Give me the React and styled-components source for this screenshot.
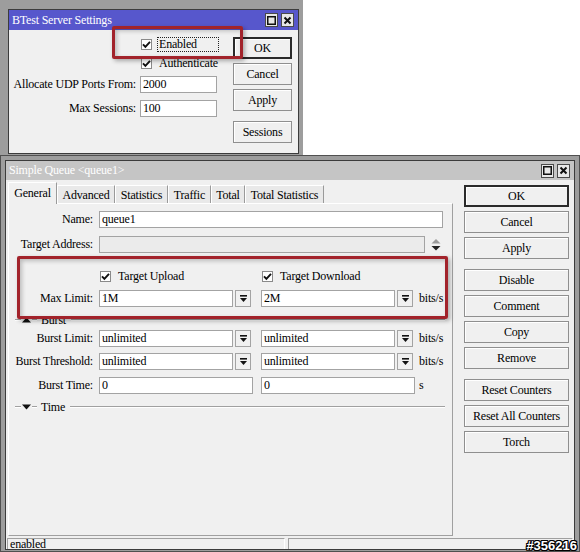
import React from "react";
import styled, { createGlobalStyle } from "styled-components";

const GlobalStyle = createGlobalStyle`
  html, body { margin: 0; padding: 0; background: #fff; }
  body {
    font-family: "Liberation Serif", "Times New Roman", serif;
    font-size: 12px;
    letter-spacing: -0.2px;
    color: #000;
  }
  * { box-sizing: border-box; }
`;

const Page = styled.div`
  position: relative;
  width: 580px;
  height: 552px;
  overflow: hidden;
  background: #fff;
`;

const Frame = styled.div`
  position: relative;
  width: ${(p) => p.$w}px;
  height: ${(p) => p.$h}px;
  padding: ${(p) => p.$pad};
  background: #9d9d9d;
  border: ${(p) => (p.$outline ? "1px solid #505050" : "none")};
`;

const Window = styled.div`
  display: flex;
  flex-direction: column;
  height: 100%;
  border: 1px solid #3c3c3c;
  background: #f0f0f0;
`;

const TitleBar = styled.div`
  display: flex;
  align-items: center;
  justify-content: space-between;
  flex-shrink: 0;
  height: ${(p) => p.$h}px;
  padding: ${(p) => p.$pad};
  background: ${(p) => (p.$active ? "#5757cc" : "#c5c5c5")};
  color: #fff;
  white-space: nowrap;
`;

const TitleButtons = styled.div`
  display: flex;
  gap: 3px;
`;

const TitleButton = styled.div`
  display: flex;
  align-items: center;
  justify-content: center;
  width: 13px;
  height: 14px;
  background: #e8e8e8;
  border: 1px solid #4a4a4a;
`;

const Highlight = styled.div`
  position: absolute;
  left: ${(p) => p.$x}px;
  top: ${(p) => p.$y}px;
  width: ${(p) => p.$w}px;
  height: ${(p) => p.$h}px;
  border: 3px solid #a2232b;
  border-radius: 2px;
  box-shadow: 2px 2px 4px rgba(0, 0, 0, 0.3), inset 2px 2px 4px rgba(0, 0, 0, 0.22);
  pointer-events: none;
  z-index: 5;
`;

/* ---------- shared form parts ---------- */

const Row = styled.div`
  display: flex;
  align-items: center;
  height: ${(p) => p.$h || 17}px;
  margin-top: ${(p) => p.$mt || 0}px;
  white-space: nowrap;
`;

const Label = styled.div`
  flex-shrink: 0;
  width: ${(p) => p.$w}px;
  margin-right: ${(p) => p.$gap}px;
  text-align: right;
`;

const Field = styled.div`
  flex-shrink: 0;
  width: ${(p) => p.$w}px;
  height: 17px;
  margin-right: ${(p) => p.$mr || 0}px;
  padding-left: 2px;
  line-height: 15px;
  background: ${(p) => (p.$disabled ? "#ebebeb" : "#fff")};
  border: 1px solid #a3a3a3;
  overflow: hidden;
`;

const DropBtn = styled.div`
  flex-shrink: 0;
  display: flex;
  align-items: center;
  justify-content: center;
  width: 16px;
  height: 17px;
  margin: 0 ${(p) => p.$mr || 0}px 0 2px;
  background: #f0f0f0;
  border: 1px solid #a3a3a3;
`;

const Unit = styled.span`
  margin-left: ${(p) => p.$ml}px;
`;

const Check = styled.label`
  display: flex;
  align-items: center;
  flex-shrink: 0;
  width: ${(p) => (p.$w ? `${p.$w}px` : "auto")};
  padding-left: 1px;
  gap: 5px;
`;

const CheckBox = styled.span`
  display: flex;
  align-items: center;
  justify-content: center;
  width: 11px;
  height: 11px;
  background: #fff;
  border: 1px solid #8a8a8a;
`;

const FocusText = styled.span`
  padding: 0 1px;
  line-height: 13px;
  border: 1px dotted ${(p) => (p.$focus ? "#222" : "transparent")};
  width: ${(p) => (p.$w ? `${p.$w}px` : "auto")};
`;

const Button = styled.div`
  display: flex;
  align-items: center;
  justify-content: center;
  width: 100%;
  height: 22px;
  margin-top: ${(p) => p.$mt || 0}px;
  background: #f0f0f0;
  border: ${(p) => (p.$default ? "2px solid #2a2a2a" : "1px solid #8f8f8f")};
  box-shadow: inset 1px 1px 0 #fff;
`;

const ButtonColumn = styled.div`
  display: flex;
  flex-direction: column;
  flex-shrink: 0;
  width: ${(p) => p.$w}px;
  margin-top: ${(p) => p.$mt || 0}px;
`;

/* ---------- BTest window ---------- */

const BTBody = styled.div`
  flex: 1;
  display: flex;
  justify-content: space-between;
  padding: 7px 6px 0 0;
`;

const BTForm = styled.div`
  display: flex;
  flex-direction: column;
`;

/* ---------- Simple Queue window ---------- */

const SQBody = styled.div`
  flex: 1;
  display: flex;
  flex-direction: column;
  padding: 2px 5px 0 2px;
  min-height: 0;
`;

const Main = styled.div`
  flex: 1;
  display: flex;
  gap: 11px;
  min-height: 0;
`;

const LeftCol = styled.div`
  display: flex;
  flex-direction: column;
  width: 445px;
`;

const Tabs = styled.div`
  display: flex;
  height: 21px;
  position: relative;
  z-index: 1;
`;

const Tab = styled.div`
  display: flex;
  align-items: center;
  justify-content: center;
  width: ${(p) => p.$w}px;
  height: ${(p) => (p.$active ? 22 : 18)}px;
  margin-top: ${(p) => (p.$active ? 0 : 3)}px;
  padding-top: ${(p) => (p.$active ? 0 : 1)}px;
  background: ${(p) => (p.$active ? "#f0f0f0" : "#e9e9e9")};
  border-top: 1px solid #fff;
  border-left: 1px solid #fff;
  border-right: 1px solid #9a9a9a;
  white-space: nowrap;
`;

const Panel = styled.div`
  flex: 1;
  padding-top: 6px;
  border: 1px solid;
  border-color: #fff #a0a0a0 #a0a0a0 #fff;
`;

const SectionHeader = styled.div`
  display: flex;
  align-items: center;
  height: 12px;
  margin: ${(p) => p.$mt}px 7px 0 6px;
  gap: 1px;
`;

const Etch = styled.span`
  display: block;
  flex: ${(p) => (p.$grow ? 1 : "none")};
  width: ${(p) => (p.$grow ? "auto" : `${p.$w}px`)};
  height: 2px;
  border-top: 1px solid #a0a0a0;
  border-bottom: 1px solid #fff;
`;

const SectionTitle = styled.span`
  margin: 0 4px 0 3px;
`;

const StatusBar = styled.div`
  display: flex;
  gap: 3px;
  height: 11px;
  margin: 2px -4px 0 -1px;
`;

const StatusCell = styled.div`
  flex: ${(p) => (p.$w ? "none" : 1)};
  width: ${(p) => (p.$w ? `${p.$w}px` : "auto")};
  padding-left: 2px;
  line-height: 11px;
  border-top: 1px solid #a0a0a0;
  border-left: 1px solid #a0a0a0;
  border-right: 1px solid #fff;
`;

const Watermark = styled.div`
  position: absolute;
  right: 3px;
  bottom: -1px;
  font-family: "Liberation Sans", Arial, sans-serif;
  font-weight: bold;
  font-size: 13px;
  letter-spacing: 0;
  color: #fff;
  text-shadow: 1px 0 0 #000, -1px 0 0 #000, 0 1px 0 #000, 0 -1px 0 #000,
    1px 1px 0 #000, -1px -1px 0 #000, 1px -1px 0 #000, -1px 1px 0 #000;
  z-index: 6;
`;

/* ---------- icons ---------- */

const MaxIcon = () => (
  <svg width="9" height="9" viewBox="0 0 9 9">
    <rect x="0.75" y="0.75" width="7.5" height="7.5" fill="none" stroke="#111" strokeWidth="1.5" />
  </svg>
);

const CloseIcon = () => (
  <svg width="9" height="9" viewBox="0 0 9 9">
    <path d="M1.5 1.5 7.5 7.5 M7.5 1.5 1.5 7.5" stroke="#111" strokeWidth="2" />
  </svg>
);

const CheckMark = () => (
  <svg width="9" height="9" viewBox="0 0 9 9">
    <path d="M1 4.3 3.4 6.8 8 1.8" fill="none" stroke="#111" strokeWidth="1.9" />
  </svg>
);

const DropIcon = () => (
  <svg width="9" height="9" viewBox="0 0 9 9">
    <rect x="1" y="1" width="7" height="1.6" fill="#111" />
    <path d="M1 4h7L4.5 8z" fill="#111" />
  </svg>
);

const UpDownIcon = () => (
  <svg width="10" height="14" viewBox="0 0 10 14" style={{ marginLeft: 6 }}>
    <path d="M0.5 5.5 5 1 9.5 5.5z" fill="#9a9a9a" />
    <path d="M0.5 8 9.5 8 5 12.5z" fill="#222" />
  </svg>
);

const Triangle = ({ up }) => (
  <svg width="9" height="6" viewBox="0 0 9 6">
    <path d={up ? "M0 5.5 4.5 0.5 9 5.5z" : "M0 0.5 9 0.5 4.5 5.5z"} fill="#111" />
  </svg>
);

const CheckItem = ({ children, w, focus, textW }) => (
  <Check $w={w}>
    <CheckBox>
      <CheckMark />
    </CheckBox>
    <FocusText $focus={focus} $w={textW}>
      {children}
    </FocusText>
  </Check>
);

const WindowTitle = ({ active, text, h, pad }) => (
  <TitleBar $active={active} $h={h} $pad={pad}>
    <span>{text}</span>
    <TitleButtons>
      <TitleButton>
        <MaxIcon />
      </TitleButton>
      <TitleButton>
        <CloseIcon />
      </TitleButton>
    </TitleButtons>
  </TitleBar>
);

const LimitRow = ({ label, a, b, mt }) => (
  <Row $mt={mt}>
    <Label $w={84} $gap={6}>{label}</Label>
    <Field $w={134}>{a}</Field>
    <DropBtn $mr={10}>
      <DropIcon />
    </DropBtn>
    <Field $w={134}>{b}</Field>
    <DropBtn>
      <DropIcon />
    </DropBtn>
    <Unit $ml={6}>bits/s</Unit>
  </Row>
);

const SectionLine = ({ title, up, mt }) => (
  <SectionHeader $mt={mt}>
    <Etch $w={6} />
    <Triangle up={up} />
    <Etch $w={5} />
    <SectionTitle>{title}</SectionTitle>
    <Etch $grow />
  </SectionHeader>
);

const tabs = [
  { name: "General", w: 49, active: true },
  { name: "Advanced", w: 58 },
  { name: "Statistics", w: 53 },
  { name: "Traffic", w: 43 },
  { name: "Total", w: 34 },
  { name: "Total Statistics", w: 79 },
];

const sqButtons = [
  { t: "OK", def: true },
  { t: "Cancel", mt: 4 },
  { t: "Apply", mt: 4 },
  { t: "Disable", mt: 10 },
  { t: "Comment", mt: 4 },
  { t: "Copy", mt: 4 },
  { t: "Remove", mt: 4 },
  { t: "Reset Counters", mt: 10 },
  { t: "Reset All Counters", mt: 4 },
  { t: "Torch", mt: 4 },
];

export default function App() {
  return (
    <Page>
      <GlobalStyle />

      <Frame $w={303} $h={155} $pad="9px 4px 1px 8px">
        <Window>
          <WindowTitle active text="BTest Server Settings" h={20} pad="0 4px 0 3px" />
          <BTBody>
            <BTForm>
              <Row $h={15}>
                <Label $w={127} $gap={4} />
                <CheckItem focus textW={62}>Enabled</CheckItem>
              </Row>
              <Row $h={15} $mt={4}>
                <Label $w={127} $gap={4} />
                <CheckItem>Authenticate</CheckItem>
              </Row>
              <Row $mt={5}>
                <Label $w={127} $gap={4}>Allocate UDP Ports From:</Label>
                <Field $w={77}>2000</Field>
              </Row>
              <Row $mt={7}>
                <Label $w={127} $gap={4}>Max Sessions:</Label>
                <Field $w={77}>100</Field>
              </Row>
            </BTForm>
            <ButtonColumn $w={59}>
              <Button $default>OK</Button>
              <Button $mt={4}>Cancel</Button>
              <Button $mt={4}>Apply</Button>
              <Button $mt={10}>Sessions</Button>
            </ButtonColumn>
          </BTBody>
        </Window>
        <Highlight $x={112} $y={26} $w={131} $h={33} />
      </Frame>

      <Frame $w={580} $h={397} $pad="4px 4px 1px 4px" $outline>
        <Window>
          <WindowTitle text="Simple Queue <queue1>" h={19} pad="0 4px 0 3px" />
          <SQBody>
            <Main>
              <LeftCol>
                <Tabs>
                  {tabs.map((t) => (
                    <Tab key={t.name} $w={t.w} $active={t.active}>
                      {t.name}
                    </Tab>
                  ))}
                </Tabs>
                <Panel>
                  <Row $mt={1}>
                    <Label $w={84} $gap={6}>Name:</Label>
                    <Field $w={344}>queue1</Field>
                  </Row>
                  <Row $mt={8}>
                    <Label $w={84} $gap={6}>Target Address:</Label>
                    <Field $w={326} $disabled />
                    <UpDownIcon />
                  </Row>
                  <Row $h={15} $mt={16}>
                    <Label $w={84} $gap={6} />
                    <CheckItem w={162}>Target Upload</CheckItem>
                    <CheckItem>Target Download</CheckItem>
                  </Row>
                  <LimitRow mt={6} label="Max Limit:" a="1M" b="2M" />
                  <SectionLine mt={7} up title="Burst" />
                  <LimitRow mt={4} label="Burst Limit:" a="unlimited" b="unlimited" />
                  <LimitRow mt={6} label="Burst Threshold:" a="unlimited" b="unlimited" />
                  <Row $mt={7}>
                    <Label $w={84} $gap={6}>Burst Time:</Label>
                    <Field $w={154} $mr={8}>0</Field>
                    <Field $w={154}>0</Field>
                    <Unit $ml={4}>s</Unit>
                  </Row>
                  <SectionLine mt={7} title="Time" />
                </Panel>
              </LeftCol>
              <ButtonColumn $w={105} $mt={3}>
                {sqButtons.map((b) => (
                  <Button key={b.t} $default={b.def} $mt={b.mt}>
                    {b.t}
                  </Button>
                ))}
              </ButtonColumn>
            </Main>
            <StatusBar>
              <StatusCell $w={278}>enabled</StatusCell>
              <StatusCell />
            </StatusBar>
          </SQBody>
        </Window>
        <Highlight $x={16} $y={100} $w={431} $h={63} />
      </Frame>

      <Watermark>#356216</Watermark>
    </Page>
  );
}
